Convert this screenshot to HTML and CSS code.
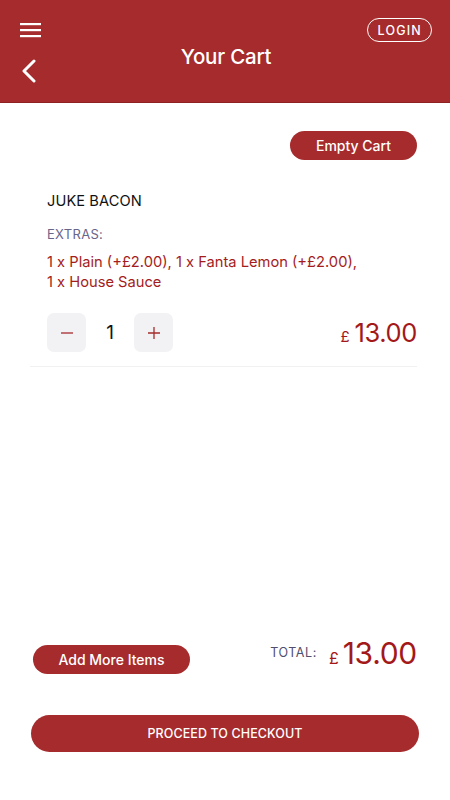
FILE: index.html
```html
<!DOCTYPE html>
<html>
<head>
<meta charset="utf-8">
<link rel="stylesheet" href="styles.css">
</head>
<body>
<div class="page">
  <header class="header">
    <div class="header-left">
      <svg class="menu-icon" width="21" height="15" viewBox="0 0 21 15">
        <rect x="0" y="0" width="21" height="2.2" fill="#fff"/>
        <rect x="0" y="6" width="21" height="2.2" fill="#fff"/>
        <rect x="0" y="12" width="21" height="2.2" fill="#fff"/>
      </svg>
      <svg class="back-icon" width="16" height="24" viewBox="0 0 16 24">
        <path d="M13 2 L3 12 L13 22" fill="none" stroke="#fff" stroke-width="3" stroke-linecap="round" stroke-linejoin="round"/>
      </svg>
    </div>
    <h1 class="title">Your Cart</h1>
    <div class="header-right">
      <button class="login">LOGIN</button>
    </div>
  </header>

  <main class="content">
    <div class="empty-row">
      <button class="pill-btn empty-btn">Empty Cart</button>
    </div>

    <div class="item">
      <div class="item-name">JUKE BACON</div>
      <div class="extras-label">EXTRAS:</div>
      <div class="extras">1 x Plain (+£2.00), 1 x Fanta Lemon (+£2.00),<br>1 x House Sauce</div>
      <div class="qty-row">
        <div class="qty">
          <button class="qty-btn">
            <svg width="14" height="14" viewBox="0 0 14 14"><path d="M1 7 H13" stroke="#a62b2c" stroke-width="1.3"/></svg>
          </button>
          <span class="qty-num">1</span>
          <button class="qty-btn">
            <svg width="14" height="14" viewBox="0 0 14 14"><path d="M1 7 H13 M7 1 V13" stroke="#a62b2c" stroke-width="1.3"/></svg>
          </button>
        </div>
        <div class="price"><span class="cur">£</span><span class="amt">13.00</span></div>
      </div>
    </div>
  </main>

  <footer class="footer">
    <div class="total-row">
      <button class="pill-btn add-btn">Add More Items</button>
      <div class="total">
        <span class="total-label">TOTAL:</span>
        <span class="cur total-cur">£</span><span class="amt total-amt">13.00</span>
      </div>
    </div>
    <button class="checkout">PROCEED TO CHECKOUT</button>
  </footer>
</div>
</body>
</html>
```
FILE: styles.css
```css
* { box-sizing: border-box; }
html, body { margin: 0; padding: 0; }
body {
  font-family: Inter, "Noto Sans", sans-serif;
  background: #fff;
  color: #111;
}
button { font-family: inherit; cursor: pointer; }

.page {
  width: 450px;
  height: 800px;
  display: flex;
  flex-direction: column;
}

.header {
  background: #a62b2c;
  height: 103px;
  display: grid;
  grid-template-columns: 1fr auto 1fr;
  padding: 0 18px 0 20px;
  color: #fff;
  border-bottom: 1px solid #8e2122;
}
.header-left {
  display: flex;
  flex-direction: column;
  align-items: flex-start;
  padding-top: 23px;
}
.menu-icon { display: block; }
.back-icon { display: block; margin-top: 21px; margin-left: 1px; }
.title {
  margin: 0;
  padding-top: 44px;
  font-size: 20.5px;
  font-weight: 500;
  line-height: 26px;
  letter-spacing: -0.2px;
}
.header-right {
  display: flex;
  justify-content: flex-end;
  align-items: flex-start;
  padding-top: 18px;
}
.login {
  background: transparent;
  border: 1.3px solid #fff;
  color: #fff;
  border-radius: 12px;
  height: 24px;
  padding: 0 9px;
  font-size: 12.5px;
  font-weight: 500;
  letter-spacing: 1.2px;
}

.content {
  flex: 1;
  padding: 0 33px 0 30px;
}
.empty-row {
  display: flex;
  justify-content: flex-end;
  padding-top: 28px;
}
.pill-btn {
  background: #a62b2c;
  color: #fff;
  border: none;
  border-radius: 15px;
  height: 29px;
  font-size: 14px;
  font-weight: 500;
}
.empty-btn { width: 127px; }

.item {
  padding: 0 0 14px 17px;
  border-bottom: 1px solid #f1f1f3;
}
.item-name {
  margin-top: 32px;
  font-size: 14.6px;
  line-height: 18px;
  color: #111;
  letter-spacing: 0.1px;
}
.extras-label {
  margin-top: 16px;
  font-size: 13px;
  line-height: 16px;
  color: #67658a;
  letter-spacing: 0.3px;
}
.extras {
  margin-top: 11px;
  font-size: 14.7px;
  line-height: 19.5px;
  color: #a41c1c;
}
.qty-row {
  margin-top: 21px;
  display: flex;
  justify-content: space-between;
  align-items: center;
}
.qty {
  display: flex;
  align-items: center;
}
.qty-btn {
  width: 39px;
  height: 39px;
  border: none;
  border-radius: 7px;
  background: #f2f2f5;
  padding: 0;
  display: flex;
  align-items: center;
  justify-content: center;
}
.qty-btn svg { display: block; }
.qty-num {
  width: 48px;
  text-align: center;
  font-size: 19px;
  color: #111;
}
.price {
  display: flex;
  align-items: baseline;
  color: #a31818;
}
.cur {
  font-size: 15px;
  margin-right: 5px;
}
.amt {
  font-size: 25.5px;
  letter-spacing: -0.4px;
}

.footer {
  padding: 0 31px 48px 31px;
}
.total-row {
  display: flex;
  justify-content: space-between;
  align-items: flex-end;
  padding-left: 2px;
  padding-right: 2px;
}
.add-btn { width: 157px; }
.total {
  display: flex;
  align-items: baseline;
  color: #a31818;
  margin-bottom: 3px;
}
.total-label {
  font-size: 12.5px;
  color: #4f4e70;
  letter-spacing: 0.6px;
  margin-right: 12px;
  position: relative;
  top: -7px;
}
.total-cur { font-size: 16px; margin-right: 4px; }
.total-amt { font-size: 30px; letter-spacing: -0.3px; }

.checkout {
  margin-top: 41px;
  width: 388px;
  height: 37px;
  border: none;
  border-radius: 19px;
  background: #a62b2c;
  color: #fff;
  font-size: 12.5px;
  font-weight: 500;
  letter-spacing: 0.1px;
}
```
